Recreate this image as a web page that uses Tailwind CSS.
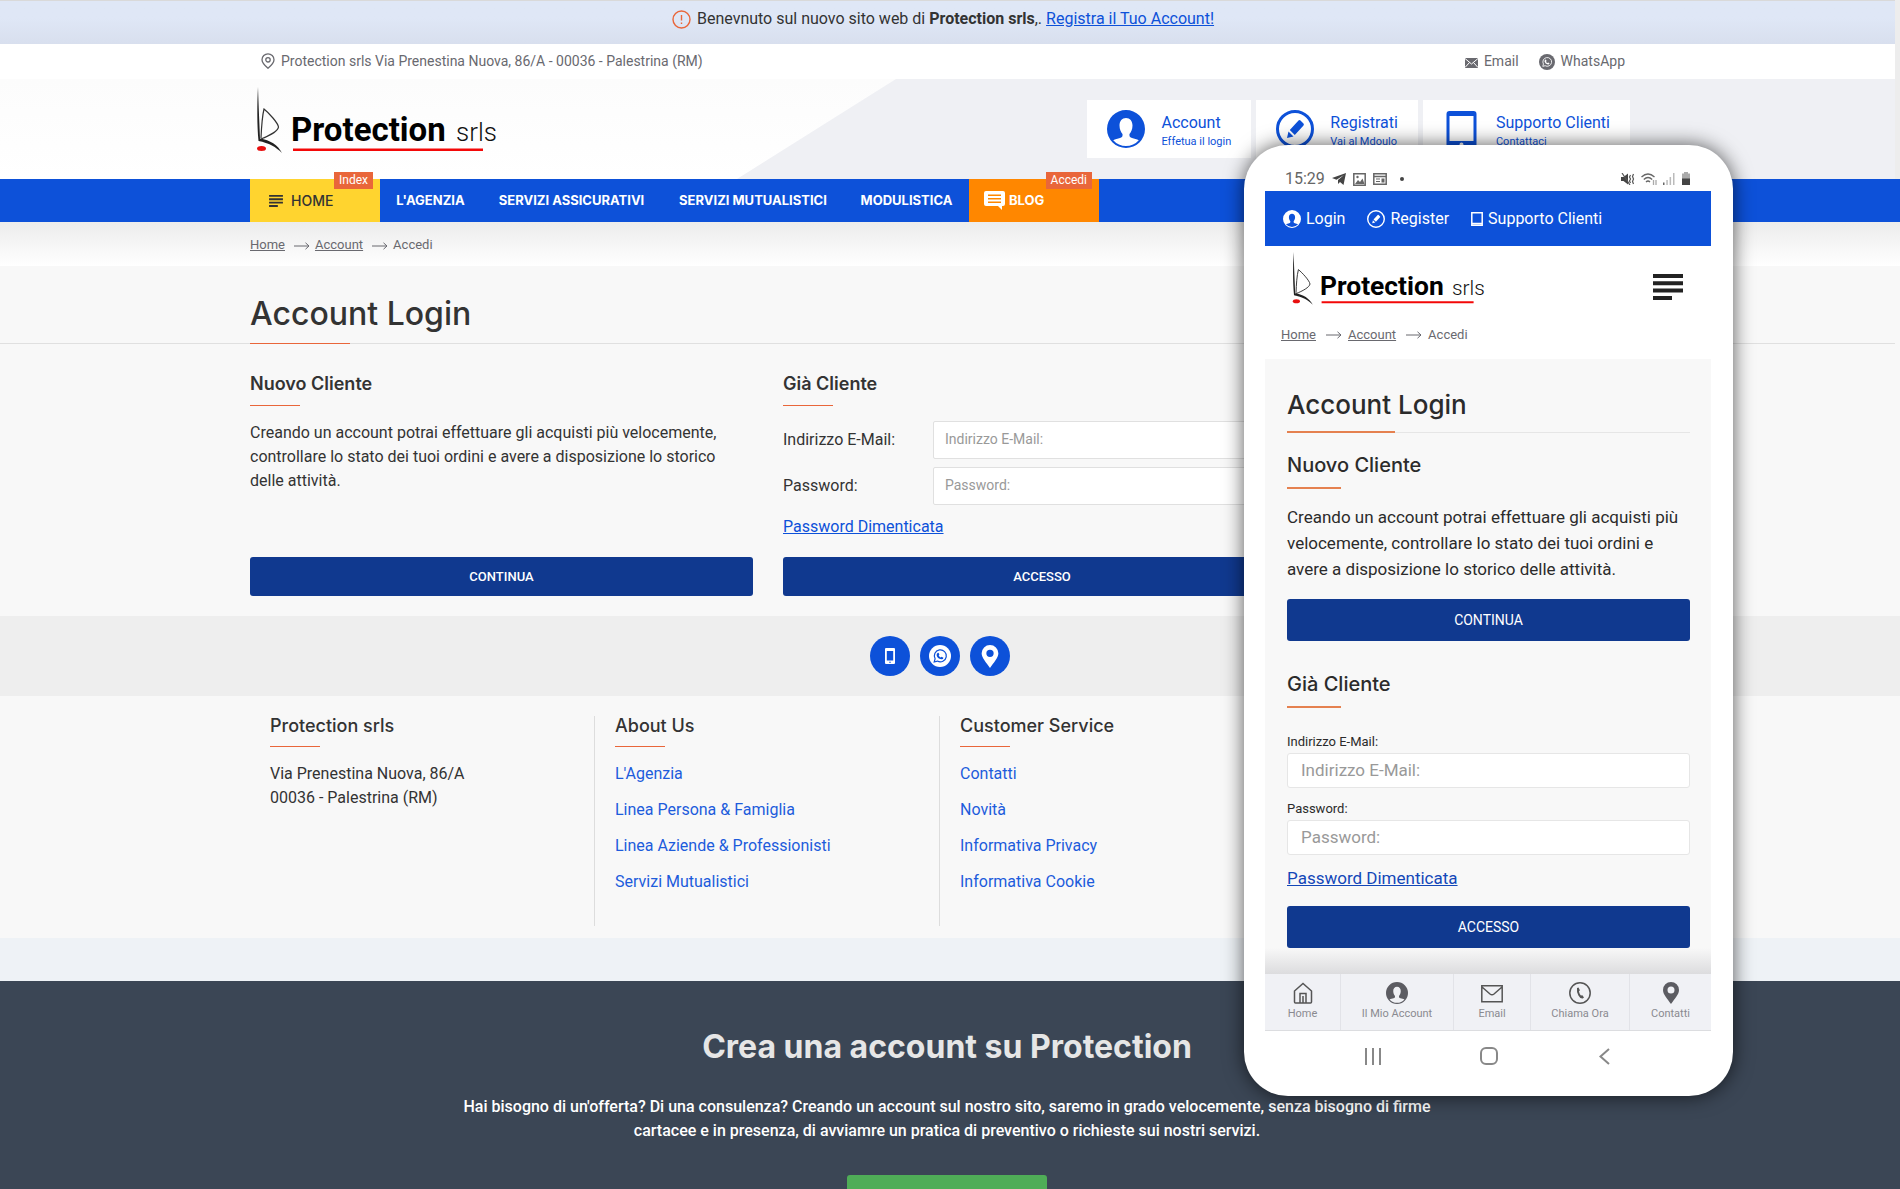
<!DOCTYPE html>
<html lang="it">
<head>
    <meta charset="UTF-8">
    <meta name="viewport" content="width=device-width, initial-scale=1.0">
    <title>Account Login - Protection srls</title>
    <script src="https://cdn.jsdelivr.net/npm/@tailwindcss/browser@4"></script>
</head>
<body class="bg-[#f8f8f8] font-['Roboto',sans-serif] text-[#333]">
    <!-- icons -->
    <svg class="hidden" xmlns="http://www.w3.org/2000/svg">
        <symbol id="i-user" viewBox="0 0 38 38"><path fill="currentColor" fill-rule="evenodd" d="M19 0a19 19 0 1 1 0 38a19 19 0 0 1 0-38zM19 8c-4 0-6.500 3-6.500 7.500c0 4 1.500 6.500 3 8.500c.3 2.500-.5 3.300-2.500 4c-2.300.8-4.800 1-6.800 2.200a17 17 0 0 0 25.600 0c-2-1.200-4.500-1.400-6.800-2.200c-2-.7-2.800-1.500-2.500-4c1.500-2 3-4.500 3-8.500c0-4.500-2.500-7.500-6.500-7.500z"/></symbol>
        <symbol id="i-pencil" viewBox="0 0 38 38"><circle cx="19" cy="19" r="17.500" fill="none" stroke="currentColor" stroke-width="3"/><path fill="currentColor" d="M11 28l1.500-6.500l5 5zM13.800 20l8.700-9.500q1-.8 2 0l3 3q.8 1 0 2l-8.700 9.500z"/></symbol>
        <symbol id="i-tablet" viewBox="0 0 32 38"><path fill="currentColor" fill-rule="evenodd" d="M4 1h24a3 3 0 0 1 3 3v31a3 3 0 0 1-3 3h-24a3 3 0 0 1-3-3v-31a3 3 0 0 1 3-3zM4 6v25h24v-25zM16 32.500a2 2 0 1 0 0 4a2 2 0 0 0 0-4z"/></symbol>
        <symbol id="i-pin" viewBox="0 0 16 22"><path fill="currentColor" fill-rule="evenodd" d="M8 0a8 8 0 0 1 8 8c0 4.500-4.500 9-8 14c-3.500-5-8-9.500-8-14a8 8 0 0 1 8-8zM8 4.500a3.500 3.500 0 1 0 0 7a3.500 3.500 0 0 0 0-7z"/></symbol>
        <symbol id="i-whatsapp" viewBox="0 0 22 22"><circle cx="11" cy="11" r="11" fill="currentColor"/><path fill="none" stroke="var(--mark)" stroke-width="1.200" d="M5.200 17l.9-3.200a6 6 0 1 1 2.300 2.300z"/><path fill="var(--mark)" d="M8.500 8l1-.3l.9 1.900l-.7.900q.8 1.500 2 2l.9-.8l1.800 1q0 1.700-2.100 1.600q-4-.8-4.700-4.100q0-1.500.9-2.200z"/></symbol>
        <symbol id="i-arrow" viewBox="0 0 16 8"><path fill="none" stroke="currentColor" d="M0 4h15M11.500 .8l3.500 3.200l-3.500 3.200"/></symbol>
        <symbol id="i-menu" viewBox="0 0 30 26"><path fill="currentColor" d="M0 0h30v4h-30zM0 7.300h30v4h-30zM0 14.600h30v4h-30zM0 21.900h19v4h-19z"/></symbol>
        <symbol id="logo" viewBox="0 0 245 70">
            <path fill="#222" d="M2 0C2.600 20 3.500 38 4 51.500C14 53 22 58 26 66C20 60 13 56 2.500 54C1 38 1 18 2 0z"/>
            <path fill="none" stroke="#333" stroke-width="1.200" d="M5 51C5.500 40 6 30 8 22C13 26 22 36 22.500 40C22 44 13 49 5 52"/>
            <ellipse cx="5.500" cy="61.500" rx="4.500" ry="2.500" fill="#e81010"/>
            <text x="35" y="54" fill="#000" font-family="Roboto" font-weight="700" font-size="33">Protection</text>
            <text x="200" y="54" fill="#111" font-family="Roboto" font-weight="300" font-size="26">srls</text>
            <path fill="#f30808" d="M37 61.500h190v2.500h-190z"/>
        </symbol>
    </svg>

    <div class="relative h-screen overflow-hidden">
        <div class="border-r-[5px] border-[#ededed]">
            <!-- notice -->
            <div class="flex h-11 items-start justify-center gap-[6px] border-t border-[#d9d9d9] bg-linear-to-b from-[#dfe7f6] from-40% to-[#d8dfee] pt-[6px] pr-[9px] leading-6">
                <svg class="mt-[3px] size-[19px] text-[#e9663a]" viewBox="0 0 19 19" fill="none" stroke="currentColor" stroke-width="1.400"><circle cx="9.500" cy="9.500" r="8.500"/><path d="M9.500 5v5.500M9.500 12.500v1.500"/></svg>
                <p>Benevnuto sul nuovo sito web di <b class="font-bold">Protection srls</b>,. <a href="#" class="text-[#0d51d9] underline">Registra il Tuo Account!</a></p>
            </div>

            <!-- top bar -->
            <div class="bg-white pr-[15px] text-sm text-[#69696f]">
                <div class="mx-auto flex h-[35px] max-w-[1380px] items-center justify-between pr-[5px] pb-[2px] pl-[11px]">
                    <p class="flex items-center gap-[6px]">
                        <svg class="h-4 w-[14px]" viewBox="0 0 14 16" fill="none" stroke="currentColor" stroke-width="1.300"><path d="M7 .8a6 6 0 0 1 6 6c0 3-3 6-6 8.500c-3-2.500-6-5.500-6-8.500a6 6 0 0 1 6-6z"/><circle cx="7" cy="6.800" r="2.200"/></svg>
                        Protection srls Via Prenestina Nuova, 86/A - 00036 - Palestrina (RM)
                    </p>
                    <div class="flex gap-5">
                        <a href="#" class="flex items-center gap-[6px]"><svg class="mt-1 h-[10px] w-[13px]" viewBox="0 0 13 10"><path fill="currentColor" d="M0 0h13v10h-13z"/><path fill="none" stroke="#fff" d="M0 .5l6.500 5.500l6.500-5.500M0 9.500l4.500-5M13 9.500l-4.500-5"/></svg>Email</a>
                        <a href="#" class="flex items-center gap-[6px]"><svg class="mt-[2px] size-4 [--mark:#fff]"><use href="#i-whatsapp"/></svg>WhatsApp</a>
                    </div>
                </div>
            </div>

            <!-- header -->
            <header class="relative bg-linear-to-b from-[#fcfcfc] to-white pr-[15px]">
                <div class="absolute inset-y-0 right-0 left-[737px] bg-[#eff0f4] [clip-path:polygon(159px_0,100%_0,100%_100%,0_100%)]"></div>
                <div class="relative mx-auto flex h-[100px] max-w-[1380px] items-start justify-between">
                    <a href="#" class="mt-2 ml-[6px]"><svg class="h-[70px] w-[245px]" role="img" aria-label="Protection srls"><use href="#logo"/></svg></a>
                    <div class="mt-[21px] flex gap-[5px] leading-none text-[#0d51d9]">
                        <a href="#" class="flex h-[58px] items-center gap-4 bg-white px-5"><svg class="size-[38px]"><use href="#i-user"/></svg><span class="flex flex-col gap-[5px] pt-1"><span>Account</span><span class="text-[11px] leading-none">Effetua il login</span></span></a>
                        <a href="#" class="flex h-[58px] items-center gap-4 bg-white px-5"><svg class="size-[38px]"><use href="#i-pencil"/></svg><span class="flex flex-col gap-[5px] pt-1"><span>Registrati</span><span class="text-[11px] leading-none">Vai al Mdoulo</span></span></a>
                        <a href="#" class="flex h-[58px] items-center gap-4 bg-white px-5"><svg class="h-[38px] w-[37px]"><use href="#i-tablet"/></svg><span class="flex flex-col gap-[5px] pt-1"><span>Supporto Clienti</span><span class="text-[11px] leading-none">Contattaci</span></span></a>
                    </div>
                </div>
            </header>
        </div>

        <!-- main menu -->
        <nav class="bg-[#0d51d9] pr-5">
            <div class="mx-auto flex h-[43px] max-w-[1380px] items-stretch font-['Inter',sans-serif] text-[13px] font-bold whitespace-nowrap text-white">
                <a href="#" class="relative flex w-[130px] items-center gap-2 bg-[#ffd42f] pl-[19px] text-sm font-medium text-[#333]">
                    <svg class="h-3 w-[14px]"><use href="#i-menu"/></svg>HOME
                    <span class="absolute -top-[7px] right-[7px] bg-[#e9663a] px-[5px] font-['Roboto',sans-serif] text-xs leading-[17px] font-normal text-white">Index</span>
                </a>
                <a href="#" class="flex w-[101px] items-center justify-center">L'AGENZIA</a>
                <a href="#" class="flex w-[181px] items-center justify-center">SERVIZI ASSICURATIVI</a>
                <a href="#" class="flex w-[182px] items-center justify-center">SERVIZI MUTUALISTICI</a>
                <a href="#" class="flex w-[125px] items-center justify-center">MODULISTICA</a>
                <a href="#" class="relative flex w-[130px] items-center gap-1 bg-[#ff8700] pl-[15px]">
                    <svg class="h-[19px] w-[21px]" viewBox="0 0 21 19"><path fill="currentColor" d="M2 0h17a2 2 0 0 1 2 2v11a2 2 0 0 1-2 2h-1v4l-4-4h-12a2 2 0 0 1-2-2v-11a2 2 0 0 1 2-2z"/><path stroke="#ff8700" stroke-width="1.500" d="M4 4.200h13M4 7.700h13M4 11.200h13"/></svg>BLOG
                    <span class="absolute -top-[7px] right-[7px] bg-[#e9663a] px-[5px] font-['Roboto',sans-serif] text-xs leading-[17px] font-normal text-white">Accedi</span>
                </a>
            </div>
        </nav>

        <!-- breadcrumb -->
        <div class="bg-linear-to-b from-[#ececec] to-white pr-5">
            <ol class="mx-auto flex h-11 max-w-[1380px] items-center gap-[5px] pt-[2px] text-[13px] text-[#69696f]">
                <li class="mr-1"><a href="#" class="underline">Home</a></li>
                <li class="mr-1 flex items-center gap-[5px]"><svg class="mt-[2px] h-2 w-4"><use href="#i-arrow"/></svg><a href="#" class="underline">Account</a></li>
                <li class="flex items-center gap-[5px]"><svg class="mt-[2px] h-2 w-4"><use href="#i-arrow"/></svg>Accedi</li>
            </ol>
        </div>

        <!-- title -->
        <div class="mr-[5px] border-b border-[#e0e0e0] pr-[15px]">
            <div class="mx-auto max-w-[1380px]">
                <h1 class="relative flex h-[77px] items-center pt-[18px] font-['Inter',sans-serif] text-[32px] font-medium after:absolute after:-bottom-px after:left-0 after:h-px after:w-[100px] after:bg-[#e9663a]">Account Login</h1>
            </div>
        </div>

        <!-- login -->
        <main class="pr-5">
            <div class="mx-auto flex max-w-[1380px] gap-[30px] pt-[30px] pb-5">
                <section class="flex w-[503px] flex-col">
                    <h2 class="mb-[15px] font-['Inter',sans-serif] text-lg leading-5 font-semibold after:mt-[11px] after:block after:h-px after:w-[50px] after:bg-[#e9663a]">Nuovo Cliente</h2>
                    <p class="leading-6">Creando un account potrai effettuare gli acquisti più velocemente, controllare lo stato dei tuoi ordini e avere a disposizione lo storico delle attività.</p>
                    <button class="mt-auto h-[39px] rounded-[3px] bg-[#10398f] text-[13px] font-medium text-white">CONTINUA</button>
                </section>
                <form class="flex w-[518px] flex-col">
                    <h2 class="mb-[15px] font-['Inter',sans-serif] text-lg leading-5 font-semibold after:mt-[11px] after:block after:h-px after:w-[50px] after:bg-[#e9663a]">Già Cliente</h2>
                    <div class="mb-2 flex items-center">
                        <label for="email" class="w-[150px]">Indirizzo E-Mail:</label>
                        <input id="email" type="email" placeholder="Indirizzo E-Mail:" class="h-[38px] flex-1 rounded-[2px] border border-[#e0e0e0] bg-white px-[11px] pb-[2px] text-sm placeholder:text-[#999]">
                    </div>
                    <div class="flex items-center">
                        <label for="password" class="w-[150px]">Password:</label>
                        <input id="password" type="password" placeholder="Password:" class="h-[38px] flex-1 rounded-[2px] border border-[#e0e0e0] bg-white px-[11px] pb-[2px] text-sm placeholder:text-[#999]">
                    </div>
                    <a href="#" class="mt-[10px] self-start leading-6 text-[#0d51d9] underline">Password Dimenticata</a>
                    <button type="button" class="mt-[18px] h-[39px] rounded-[3px] bg-[#10398f] text-[13px] font-medium text-white">ACCESSO</button>
                </form>
            </div>
        </main>

        <!-- contact icons -->
        <div class="flex h-20 items-center justify-center gap-[10px] bg-[#eee] pr-5 text-white">
            <a href="#" aria-label="Telefono" class="flex size-10 items-center justify-center rounded-full bg-[#0d51d9]"><svg class="h-4 w-[10px]" viewBox="0 0 10 16"><path fill="currentColor" fill-rule="evenodd" d="M1 0h8a1 1 0 0 1 1 1v14a1 1 0 0 1-1 1h-8a1 1 0 0 1-1-1v-14a1 1 0 0 1 1-1zM1.800 3v9.500h6.400v-9.500zM4.200 13.700v1h1.600v-1z"/></svg></a>
            <a href="#" aria-label="WhatsApp" class="flex size-10 items-center justify-center rounded-full bg-[#0d51d9]"><svg class="size-[22px] [--mark:#0d51d9]"><use href="#i-whatsapp"/></svg></a>
            <a href="#" aria-label="Mappa" class="flex size-10 items-center justify-center rounded-full bg-[#0d51d9]"><svg class="h-[23px] w-[18px]"><use href="#i-pin"/></svg></a>
        </div>

        <!-- footer -->
        <footer class="pr-5">
            <div class="mx-auto grid h-[242px] max-w-[1380px] grid-cols-4 pt-5 pb-3">
                <div class="border-r border-[#ddd] pl-5">
                    <h3 class="mb-[15px] font-['Inter',sans-serif] text-lg leading-5 font-medium after:mt-[10px] after:block after:h-px after:w-[50px] after:bg-[#e9663a]">Protection srls</h3>
                    <p class="leading-6">Via Prenestina Nuova, 86/A<br>00036 - Palestrina (RM)</p>
                </div>
                <div class="border-r border-[#ddd] pl-5">
                    <h3 class="mb-[15px] font-['Inter',sans-serif] text-lg leading-5 font-medium after:mt-[10px] after:block after:h-px after:w-[50px] after:bg-[#e9663a]">About Us</h3>
                    <ul class="flex flex-col gap-3 leading-6 text-[#1d5cdc]">
                        <li><a href="#">L'Agenzia</a></li>
                        <li><a href="#">Linea Persona &amp; Famiglia</a></li>
                        <li><a href="#">Linea Aziende &amp; Professionisti</a></li>
                        <li><a href="#">Servizi Mutualistici</a></li>
                    </ul>
                </div>
                <div class="pl-5">
                    <h3 class="mb-[15px] font-['Inter',sans-serif] text-lg leading-5 font-medium after:mt-[10px] after:block after:h-px after:w-[50px] after:bg-[#e9663a]">Customer Service</h3>
                    <ul class="flex flex-col gap-3 leading-6 text-[#1d5cdc]">
                        <li><a href="#">Contatti</a></li>
                        <li><a href="#">Novità</a></li>
                        <li><a href="#">Informativa Privacy</a></li>
                        <li><a href="#">Informativa Cookie</a></li>
                    </ul>
                </div>
            </div>
        </footer>
        <div class="h-[43px] bg-[#eef2f6]"></div>

        <!-- call to action -->
        <section class="flex flex-col items-center bg-[#3b4655] pt-[46px] pr-[6px] pb-12 text-center">
            <h2 class="font-['Inter',sans-serif] text-[32px] leading-10 font-bold text-[#e6e6e6]">Crea una account su Protection</h2>
            <p class="mt-7 max-w-[980px] leading-6 font-medium text-white">Hai bisogno di un'offerta? Di una consulenza? Creando un account sul nostro sito, saremo in grado velocemente, senza bisogno di firme cartacee e in presenza, di avviamre un pratica di preventivo o richieste sui nostri servizi.</p>
            <button aria-label="Registrati" class="mt-8 h-12 w-[200px] rounded-[3px] bg-[#4fad57]"></button>
        </section>

        <!-- phone -->
        <div class="absolute top-[145px] right-[167px] w-[489px] rounded-[44px] bg-white pr-[22px] pb-[15px] pl-[21px] shadow-[0_0_20px_rgba(0,0,0,0.65)]">
            <div class="flex h-[46px] items-end justify-between px-5 pb-[2px] text-[#666]">
                <div class="flex items-center gap-[7px] leading-5">
                    <span>15:29</span>
                    <svg class="h-3 w-[14px]" viewBox="0 0 14 12"><path fill="#444" d="M14 0l-2.500 12l-3.500-3l-2 2v-4l6-5l-7.500 4.800l-4.500-1.800z"/></svg>
                    <svg class="size-[13px]" viewBox="0 0 13 13"><path fill="none" stroke="currentColor" stroke-width="1.500" d="M.8 .8h11.400v11.400h-11.400z"/><path fill="currentColor" d="M2 11l3-4l2 2l2.500-3.500l2 5.500z"/><circle cx="4.500" cy="4" r="1.200" fill="currentColor"/></svg>
                    <svg class="h-3 w-[14px]" viewBox="0 0 14 12"><path fill="none" stroke="currentColor" stroke-width="1.500" d="M.8 .8h12.400v10.400h-12.400zM.8 3.500h12.400"/><path fill="currentColor" d="M3 5.500h4v1h-4zM3 8h4v1h-4zM8.500 5.500h3v4h-3z"/></svg>
                    <i class="ml-[6px] size-1 rounded-full bg-[#444]"></i>
                </div>
                <div class="mb-1 flex items-center gap-[6px]">
                    <svg class="h-3 w-[14px]" viewBox="0 0 14 12"><path fill="#444" d="M0 4h2.500l4.500-3.500v11l-4.500-3.500h-2.500z"/><path stroke="#555" fill="none" stroke-width="1.200" d="M1 0l8 12M9.500 2l-1 2l1 2l-1 2l1 2M12.500 1l-1 2.500l1 2.500l-1 2.500l1 2.500"/></svg>
                    <svg class="h-3 w-4" viewBox="0 0 16 12" fill="none" stroke="currentColor" stroke-width="1.300"><path d="M.5 4q6.500-6 13 0M2.800 6.500q4.200-4 8.400 0M5 9q2-2 4 0"/><path stroke="#aaa" d="M12.500 7v5M15 7v5"/></svg>
                    <svg class="h-3 w-3" viewBox="0 0 12 12"><path fill="#666" d="M0 9.500h1.500v2.500h-1.500z"/><path fill="#bbb" d="M3.300 7h1.500v5h-1.500zM6.600 4h1.500v8h-1.500zM10 0h1.500v12h-1.500z"/></svg>
                    <svg class="h-[13px] w-[10px]" viewBox="0 0 10 13"><path fill="#aaa" d="M3 0h4v1.500h2v5.500h-8v-5.500h2z"/><path fill="#444" d="M1 6.500h8v6.500h-8z"/></svg>
                </div>
            </div>

            <div class="flex h-[55px] items-center gap-[22px] bg-[#0d51d9] pl-[18px] text-white">
                <a href="#" class="flex items-center gap-[5px]"><svg class="size-[18px]"><use href="#i-user"/></svg>Login</a>
                <a href="#" class="flex items-center gap-[5px]"><svg class="size-[18px]"><use href="#i-pencil"/></svg>Register</a>
                <a href="#" class="flex items-center gap-[5px]"><svg class="h-[14px] w-3" viewBox="0 0 12 14"><path fill="none" stroke="currentColor" stroke-width="1.500" d="M.8 .8h10.400v12.400h-10.400zM.8 11.500h10.400"/></svg>Supporto Clienti</a>
            </div>

            <div class="flex h-[70px] items-start justify-between pr-7 pl-[27px]">
                <a href="#" class="mt-[6px]"><svg class="h-14 w-[196px]" role="img" aria-label="Protection srls"><use href="#logo"/></svg></a>
                <button aria-label="Menu" class="mt-7"><svg class="h-[26px] w-[30px] text-[#222]"><use href="#i-menu"/></svg></button>
            </div>
            <ol class="flex h-[43px] items-start gap-[10px] pt-[9px] pl-4 text-[13px] leading-5 text-[#69696f]">
                <li><a href="#" class="underline">Home</a></li>
                <li class="flex items-center gap-[6px]"><svg class="h-2 w-4"><use href="#i-arrow"/></svg><a href="#" class="underline">Account</a></li>
                <li class="flex items-center gap-[6px]"><svg class="h-2 w-4"><use href="#i-arrow"/></svg>Accedi</li>
            </ol>

            <div class="bg-[#f8f8f8] pt-[31px] pr-[21px] pl-[22px] text-[17px] leading-[26px] text-[#2b2b2b]">
                <h1 class="relative border-b border-[#e6e6e6] pb-3 font-['Inter',sans-serif] text-[26px] leading-[30px] font-medium after:absolute after:-bottom-px after:left-0 after:h-[2px] after:w-[108px] after:bg-[#e58150]">Account Login</h1>
                <section class="mt-5">
                    <h2 class="font-['Inter',sans-serif] text-xl leading-6 font-medium after:mt-[10px] after:block after:h-[2px] after:w-[54px] after:bg-[#e58150]">Nuovo Cliente</h2>
                    <p class="mt-[15px]">Creando un account potrai effettuare gli acquisti più velocemente, controllare lo stato dei tuoi ordini e avere a disposizione lo storico delle attività.</p>
                    <button class="mt-[17px] block h-[42px] w-full rounded-[3px] bg-[#10398f] text-sm text-white">CONTINUA</button>
                </section>
                <form class="mt-[31px]">
                    <h2 class="font-['Inter',sans-serif] text-xl leading-6 font-medium after:mt-[10px] after:block after:h-[2px] after:w-[54px] after:bg-[#e58150]">Già Cliente</h2>
                    <label for="m-email" class="mt-[23px] block text-[13px] leading-[22px]">Indirizzo E-Mail:</label>
                    <input id="m-email" type="email" placeholder="Indirizzo E-Mail:" class="block h-[35px] w-full rounded-[3px] border border-[#e6e6e6] bg-white px-[13px] pb-[2px] placeholder:text-[#999]">
                    <label for="m-password" class="mt-[10px] block text-[13px] leading-[22px]">Password:</label>
                    <input id="m-password" type="password" placeholder="Password:" class="block h-[35px] w-full rounded-[3px] border border-[#e6e6e6] bg-white px-[13px] pb-[2px] placeholder:text-[#999]">
                    <a href="#" class="mt-[10px] inline-block text-[#1347b8] underline">Password Dimenticata</a>
                    <button type="button" class="mt-[15px] block h-[42px] w-full rounded-[3px] bg-[#10398f] text-sm text-white">ACCESSO</button>
                </form>
                <div class="-mr-[21px] -ml-[22px] h-[26px] bg-linear-to-b from-[#f8f8f8] to-[#dcdcde]"></div>
            </div>

            <nav class="flex h-[57px] divide-x divide-[#e2e3e8] border-b border-[#dcdde0] bg-[#f0f1f5] text-[11px] leading-4 text-[#8a8a90]">
                <a href="#" class="flex w-[76px] flex-col items-center gap-[2px] pt-2"><svg class="size-[22px] text-[#555]" viewBox="0 0 22 22" fill="none" stroke="currentColor" stroke-width="1.500"><path d="M2.500 20v-11l8.500-7.500l8.500 7.500v11q0 1-1 1h-15q-1 0-1-1zM8 21v-9.500h6v9.500M11 14v7"/></svg>Home</a>
                <a href="#" class="flex w-[113px] flex-col items-center gap-[2px] pt-2"><svg class="size-[22px] text-[#5c5c62]"><use href="#i-user"/></svg>Il Mio Account</a>
                <a href="#" class="flex w-[77px] flex-col items-center gap-[2px] pt-2"><svg class="size-[22px] text-[#555]" viewBox="0 0 22 22" fill="none" stroke="currentColor" stroke-width="1.500"><path d="M.8 3.800h20.400v16h-20.400zM1 5l8 7q2 1.500 4 0l8-7"/></svg>Email</a>
                <a href="#" class="flex w-[99px] flex-col items-center gap-[2px] pt-2"><svg class="size-[22px] text-[#555]" viewBox="0 0 22 22"><circle cx="11" cy="11" r="10.200" fill="none" stroke="currentColor" stroke-width="1.500"/><path fill="currentColor" d="M8 6l1.500-.6l1.400 2.800l-1 1.300q.6 2.500 2 4l1.500-.3l1.600 2.300l-1.300 1.100q-2.300.3-4.300-3.200t-1.400-7.400z"/></svg>Chiama Ora</a>
                <a href="#" class="flex flex-1 flex-col items-center gap-[2px] pt-2"><svg class="h-[22px] w-4 text-[#5c5c62]"><use href="#i-pin"/></svg>Contatti</a>
            </nav>
            <div class="flex h-[50px] items-center justify-between pr-[97px] pl-[99px] text-[#888]">
                <svg class="h-[17px] w-[18px]" viewBox="0 0 18 17" stroke="currentColor" stroke-width="2"><path d="M2 0v17M9 0v17M16 0v17"/></svg>
                <svg class="size-[18px]" viewBox="0 0 18 18" fill="none" stroke="currentColor" stroke-width="2"><rect x="1" y="1" width="16" height="16" rx="5"/></svg>
                <svg class="h-[17px] w-[18px]" viewBox="0 0 18 17" fill="none" stroke="currentColor" stroke-width="2"><path d="M13 1l-8.500 7.500l8.500 7.500"/></svg>
            </div>
        </div>
    </div>
</body>
</html>
